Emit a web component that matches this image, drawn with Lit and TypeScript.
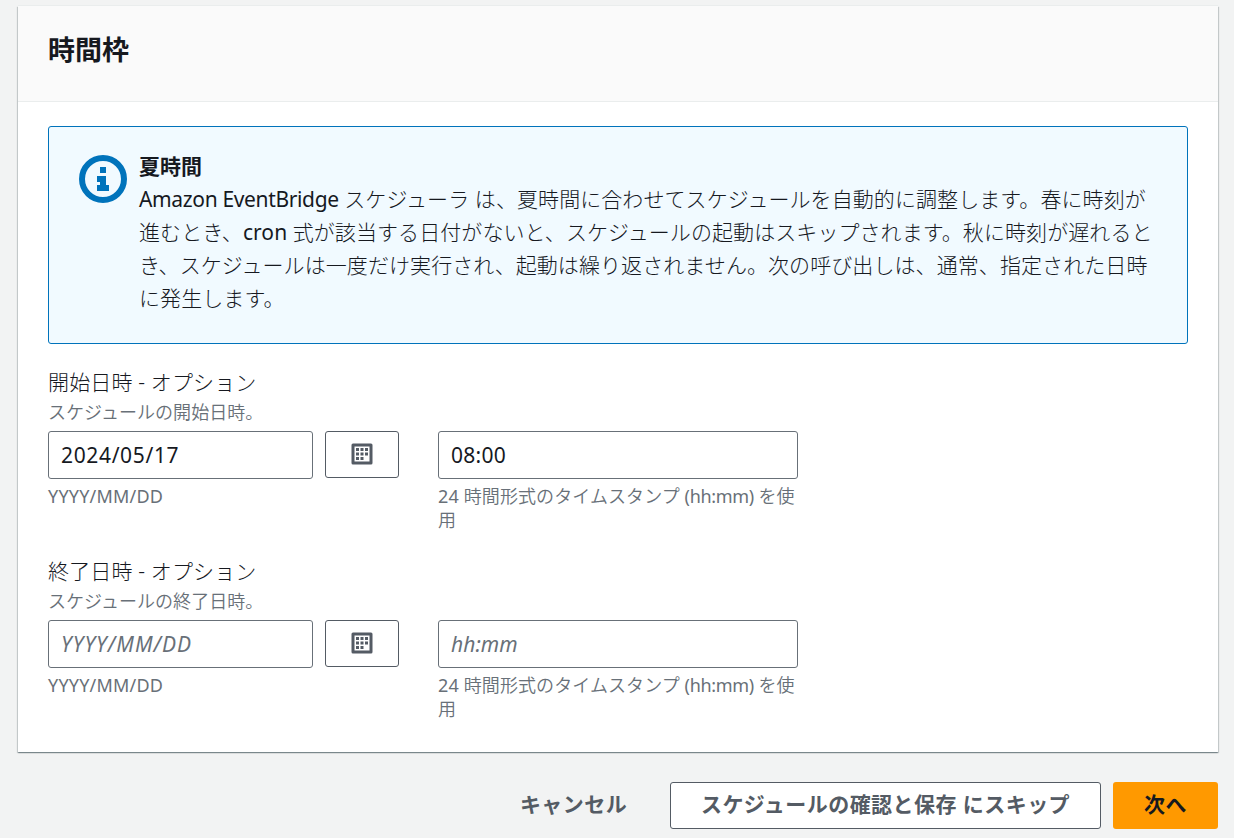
import { LitElement, html, css, svg } from "lit";
import { customElement, property } from "lit/decorators.js";

const cells = [
  [5, 5], [9.5, 5], [14, 5],
  [5, 9.5], [9.5, 9.5], [14, 9.5],
  [5, 14], [9.5, 14],
];

@customElement("date-time-row")
class DateTimeRow extends LitElement {
  @property() label = "";
  @property() description = "";
  @property() date = "";
  @property() time = "";

  static styles = css`
    :host { display: block; }
    .label { font-size: 21px; line-height: 31px; height: 33px; color: #16191f; font-weight: 300; letter-spacing: 0.15px; white-space: nowrap; }
    .desc { font-size: 18px; line-height: 24px; height: 31px; color: #687078; font-weight: 350; letter-spacing: 0.05px; }
    .row { display: grid; grid-template-columns: 265px 74px 360px; column-gap: 12px; align-items: start; }
    .time { margin-left: 27px; width: 360px; }
    input {
      display: block; box-sizing: border-box; width: 100%; height: 48px; padding: 0 12px 1px;
      border: 1px solid #687078; border-radius: 3px; background: #fff; color: #16191f;
      font: 21px "Noto Sans", "Noto Sans CJK JP", sans-serif; letter-spacing: 0.65px; outline: none;
    }
    .time input { letter-spacing: 0.3px; }
    input::placeholder { color: #687078; font-style: italic; opacity: 1; letter-spacing: 1px; }
    .time input::placeholder { letter-spacing: 0.05px; }
    .cal {
      display: flex; align-items: center; justify-content: center; box-sizing: border-box;
      width: 74px; height: 47px; padding: 0 0 1px; border: 1px solid #545b64; border-radius: 3px; background: #fff;
    }
    .hint { margin-top: 5px; font-size: 18px; line-height: 24px; color: #687078; font-weight: 350; letter-spacing: 0.08px; white-space: nowrap; }
    .lat { font-weight: 400; letter-spacing: 0.2px; }
    .paren { font-weight: 400; letter-spacing: -0.35px; }
  `;

  render() {
    return html`
      <div class="label">${this.label}</div>
      <div class="desc">${this.description}</div>
      <div class="row">
        <div>
          <input .value=${this.date} placeholder="YYYY/MM/DD" />
          <div class="hint"><span class="lat">YYYY/MM/DD</span></div>
        </div>
        <button class="cal" aria-label="calendar">
          <svg width="22" height="22" viewBox="0 0 22 22">
            <rect x="2" y="2" width="18" height="18" fill="none" stroke="#545b64" stroke-width="3" stroke-linejoin="round" />
            ${cells.map(([x, y]) => svg`<rect x=${x} y=${y} width="3" height="3" fill="#545b64" />`)}
          </svg>
        </button>
        <div class="time">
          <input .value=${this.time} placeholder="hh:mm" />
          <div class="hint"><span class="lat">24</span> 時間形式のタイムスタンプ <span class="paren">(hh:mm)</span> を使<br />用</div>
        </div>
      </div>
    `;
  }
}

@customElement("app-root")
class AppRoot extends LitElement {
  static styles = css`
    :host {
      display: flex; flex-direction: column; box-sizing: border-box; width: 1234px; height: 838px; overflow: hidden;
      padding: 6px 16px 0 18px; background: #f2f3f3; color: #16191f;
      font-family: "Noto Sans", "Noto Sans CJK JP", sans-serif; font-size: 21px;
    }
    .card {
      box-sizing: border-box; width: 1200px; height: 746px; background: #fff; flex: none;
      box-shadow: 0 1px 1px 0 rgba(0, 28, 36, 0.3), 1px 1px 1px 0 rgba(0, 28, 36, 0.15), -1px 1px 1px 0 rgba(0, 28, 36, 0.15), 0 -1px 0 0 #eaeded;
    }
    .head { box-sizing: border-box; height: 96px; padding: 24px 30px; background: #fafafa; border-bottom: 1px solid #eaeded; }
    h2 { margin: 0; font-size: 27px; line-height: 40px; font-weight: 700; }
    .body { padding: 24px 30px 0; }
    .alert {
      display: flex; gap: 12px; box-sizing: border-box; height: 218px; padding: 23px 30px;
      border: 1px solid #0073bb; border-radius: 3px; background: #f1faff; margin-bottom: 23px;
    }
    .info { flex: none; margin-top: 5px; }
    .alert-title { line-height: 33px; font-weight: 700; }
    .alert-text { line-height: 33px; font-weight: 300; letter-spacing: 0.08px; white-space: nowrap; }
    .lat { font-weight: 400; letter-spacing: -0.35px; }
    .cron { font-weight: 400; letter-spacing: 0.05px; }
    .second { margin-top: 24px; display: block; }
    .actions { display: flex; align-items: center; justify-content: flex-end; gap: 12px; margin-top: 30px; width: 1200px; height: 47px; }
    button {
      box-sizing: border-box; height: 47px; border: 1px solid transparent; border-radius: 3px; padding: 0 0 5px;
      font: 700 21px "Noto Sans", "Noto Sans CJK JP", sans-serif; color: #545b64; background: transparent; white-space: nowrap;
      letter-spacing: 0.45px;
    }
    .cancel { width: 169px; }
    .skip { width: 431px; background: #fff; border-color: #545b64; }
    .next { width: 105px; background: #ff9900; color: #16191f; }
  `;

  render() {
    return html`
      <section class="card">
        <header class="head"><h2>時間枠</h2></header>
        <div class="body">
          <div class="alert">
            <svg class="info" width="48" height="48" viewBox="0 0 48 48">
              <circle cx="24" cy="24" r="21" fill="none" stroke="#0073bb" stroke-width="6" />
              <path d="M21 12h6v6h-6zM18 21h9v9h3v6H18v-6h3v-3h-3z" fill="#0073bb" />
            </svg>
            <div>
              <div class="alert-title">夏時間</div>
              <div class="alert-text">
                <span class="lat">Amazon EventBridge</span> スケジューラ は、夏時間に合わせてスケジュールを自動的に調整します。春に時刻が<br />進むとき、<span class="cron">cron</span> 式が該当する日付がないと、スケジュールの起動はスキップされます。秋に時刻が遅れると<br />き、スケジュールは一度だけ実行され、起動は繰り返されません。次の呼び出しは、通常、指定された日時<br />に発生します。
              </div>
            </div>
          </div>
          <date-time-row label="開始日時 - オプション" description="スケジュールの開始日時。" date="2024/05/17" time="08:00"></date-time-row>
          <date-time-row class="second" label="終了日時 - オプション" description="スケジュールの終了日時。"></date-time-row>
        </div>
      </section>
      <div class="actions">
        <button class="cancel">キャンセル</button>
        <button class="skip">スケジュールの確認と保存 にスキップ</button>
        <button class="next">次へ</button>
      </div>
    `;
  }
}
